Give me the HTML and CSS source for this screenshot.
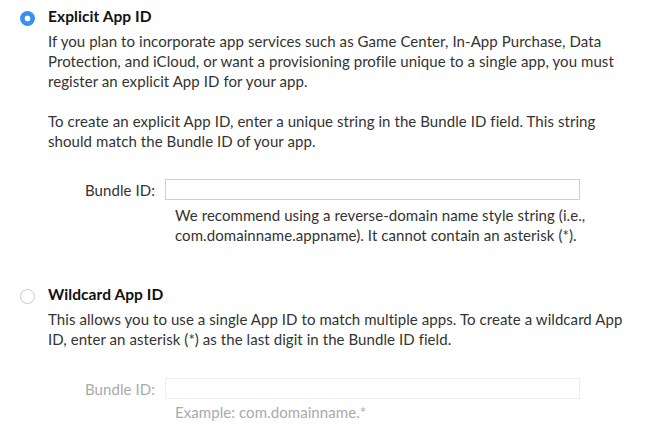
FILE: index.html
```html
<!DOCTYPE html>
<html>
<head>
<meta charset="utf-8">
<link rel="stylesheet" href="styles.css">
</head>
<body>
<div class="page">
  <section class="option">
    <span class="radio radio-on"></span>
    <div class="content">
      <h2 class="title">Explicit App ID</h2>
      <p class="text">If you plan to incorporate app services such as Game Center, In-App Purchase, Data<br>Protection, and iCloud, or want a provisioning profile unique to a single app, you must<br>register an explicit App ID for your app.</p>
      <p class="text">To create an explicit App ID, enter a unique string in the Bundle ID field. This string<br>should match the Bundle ID of your app.</p>
      <div class="field">
        <label class="label">Bundle ID:</label>
        <div class="input"></div>
      </div>
      <p class="help">We recommend using a reverse-domain name style string (i.e.,<br>com.domainname.appname). It cannot contain an asterisk (*).</p>
    </div>
  </section>
  <section class="option option-second">
    <span class="radio"></span>
    <div class="content">
      <h2 class="title">Wildcard App ID</h2>
      <p class="text">This allows you to use a single App ID to match multiple apps. To create a wildcard App<br>ID, enter an asterisk (*) as the last digit in the Bundle ID field.</p>
      <div class="field field-disabled">
        <label class="label">Bundle ID:</label>
        <div class="input"></div>
      </div>
      <p class="help help-disabled">Example: com.domainname.*</p>
    </div>
  </section>
</div>
</body>
</html>
```

FILE: styles.css
```css
html, body {
  margin: 0;
  padding: 0;
  background: #fff;
}
body {
  font-family: Lato, "Open Sans", sans-serif;
  font-size: 15px;
  letter-spacing: 0.07px;
  color: #333;
}
.page {
  padding: 6px 0 0 20px;
}
.option {
  display: flex;
  gap: 13px;
}
.option-second {
  margin-top: 39px;
}
.radio {
  flex: none;
  width: 15px;
  height: 15px;
  box-sizing: border-box;
  border-radius: 50%;
  border: 1px solid #c9c9c9;
  margin-top: 5px;
  background: #fff;
}
.radio-on {
  border: none;
  background: radial-gradient(circle, #fff 0 2.6px, #3b8ff0 3.2px);
}
.content {
  width: 603px;
}
.title {
  margin: 0 0 5px;
  font-size: 15.5px;
  line-height: 20px;
  font-weight: bold;
  color: #111;
}
.text {
  margin: 0 0 20px;
  line-height: 20px;
  white-space: nowrap;
}
.field {
  display: flex;
  align-items: center;
  margin: 28px 0 0 37px;
  gap: 10px;
}
.field-disabled {
  margin-top: 29px;
}
.label {
  width: 70px;
  flex: none;
  text-align: right;
  white-space: nowrap;
}
.input {
  width: 415px;
  height: 21px;
  box-sizing: border-box;
  border: 1px solid #cfcfcf;
}
.help {
  margin: 5px 0 0 127px;
  line-height: 20px;
  white-space: nowrap;
}
.field-disabled .label {
  color: #aaa;
}
.field-disabled .input {
  border-color: #eee;
}
.help-disabled {
  margin-top: 3px;
  color: #aaa;
}
```
